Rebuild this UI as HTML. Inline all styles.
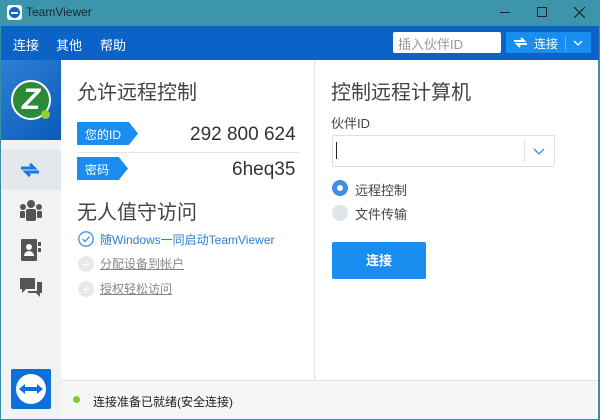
<!DOCTYPE html><html><head><meta charset="utf-8"><style>
*{margin:0;padding:0;box-sizing:border-box}
body{width:600px;height:420px;overflow:hidden;background:#3790a6;font-family:"Liberation Sans","Noto Sans CJK SC",sans-serif;position:relative}
.a{position:absolute}
.t{color:#444}
</style></head><body>
<div class="a" style="left:0;top:0;width:600px;height:26px;background:#3c95aa"></div>
<div class="a" style="left:7px;top:5px;width:15px;height:15px;background:#fff;border-radius:3px"><div class="a" style="left:2px;top:2px;width:11px;height:11px;border-radius:50%;background:#0e64c8"></div><div class="a" style="left:4px;top:7px;width:7px;height:1.5px;background:#fff"></div></div>
<div class="a" style="left:26px;top:5px;font-size:12px;color:#1a2a30">TeamViewer</div>
<div class="a" style="left:500px;top:12px;width:10px;height:1px;background:#223"></div>
<div class="a" style="left:537px;top:7px;width:10px;height:10px;border:1px solid #223"></div>
<svg class="a" style="left:574px;top:7px" width="11" height="11"><path d="M0 0L11 11M11 0L0 11" stroke="#223" stroke-width="1.2"/></svg>
<div class="a" style="left:1px;top:26px;width:598px;height:34px;background:#0b63c8"></div>
<div class="a" style="left:13px;top:35px;font-size:13px;color:#fff">连接</div>
<div class="a" style="left:56px;top:35px;font-size:13px;color:#fff">其他</div>
<div class="a" style="left:100px;top:35px;font-size:13px;color:#fff">帮助</div>
<div class="a" style="left:393px;top:32px;width:108px;height:21px;background:#fff;border-radius:2px;font-size:13px;color:#999;padding:2px 5px">插入伙伴ID</div>
<div class="a" style="left:506px;top:32px;width:85px;height:21px;background:#1a8ef0;color:#fff;font-size:12px;padding:3px 0 0 28px">连接</div>
<svg class="a" style="left:513px;top:37px" width="15" height="11"><path d="M1 4h10l-3-3M14 7H4l3 3" stroke="#fff" stroke-width="2" fill="none"/></svg>
<div class="a" style="left:565px;top:36px;width:1px;height:14px;background:#6bb6f5"></div>
<svg class="a" style="left:573px;top:40px" width="10" height="6"><path d="M1 1l4 4 4-4" stroke="#fff" stroke-width="1.3" fill="none"/></svg>
<div class="a" style="left:1px;top:60px;width:60px;height:359px;background:#f1f2f4"></div>
<div class="a" style="left:1px;top:60px;width:60px;height:80px;background:linear-gradient(135deg,#2d7fd6,#0a5bb8)"></div>
<div class="a" style="left:11px;top:80px;width:40px;height:40px;border-radius:50%;background:#2a8a3a;border:2px solid #fff"><div style="color:#fff;font-size:30px;font-weight:bold;text-align:center;line-height:36px;font-style:italic">Z</div></div>
<div class="a" style="left:41px;top:110px;width:9px;height:9px;border-radius:50%;background:#8fd02a"></div>
<div class="a" style="left:1px;top:150px;width:60px;height:40px;background:#e4e7ec"></div>
<svg class="a" style="left:20px;top:163px" width="20" height="14"><path d="M1 5h13l-4-4M19 9H6l4 4" stroke="#1678e0" stroke-width="3" fill="none"/></svg>
<svg class="a" style="left:19px;top:199px" width="24" height="22" fill="#555"><circle cx="12" cy="5" r="4"/><circle cx="4" cy="8" r="3"/><circle cx="20" cy="8" r="3"/><rect x="7" y="10" width="10" height="12" rx="2"/><rect x="1" y="12" width="5" height="7" rx="1"/><rect x="18" y="12" width="5" height="7" rx="1"/></svg>
<svg class="a" style="left:21px;top:239px" width="20" height="22"><rect x="0" y="0" width="16" height="22" rx="1" fill="#555"/><rect x="17" y="3" width="3" height="4" fill="#555"/><rect x="17" y="9" width="3" height="4" fill="#555"/><circle cx="8" cy="8" r="3" fill="#fff"/><path d="M3 17a5 5 0 0110 0z" fill="#fff"/></svg>
<svg class="a" style="left:20px;top:278px" width="22" height="20" fill="#555"><path d="M0 0h15v11H6l-4 4v-4H0z"/><path d="M17 4h5v11h-2v4l-4-4H8v-2h9z"/></svg>
<div class="a" style="left:11px;top:369px;width:40px;height:40px;background:#0e6fd8;border-radius:2px"><div class="a" style="left:5px;top:5px;width:30px;height:30px;border-radius:50%;background:#fff"></div><svg class="a" style="left:8px;top:14px" width="24" height="12"><path d="M0 6l6-5v3h12V1l6 5-6 5V8H6v3z" fill="#0e6fd8"/></svg></div>
<div class="a" style="left:61px;top:60px;width:537px;height:320px;background:#fff"></div>
<div class="a" style="left:314px;top:60px;width:1px;height:320px;background:#e2e4e8"></div>
<div class="a" style="left:61px;top:380px;width:537px;height:39px;background:#f6f6f6;border-top:1px solid #e2e2e2"></div>
<div class="a" style="left:73px;top:396px;width:7px;height:7px;border-radius:50%;background:#7fcf1f"></div>
<div class="a t" style="left:93px;top:393px;font-size:12px;color:#222">连接准备已就绪(安全连接)</div>
<div class="a t" style="left:77px;top:76px;font-size:20px">允许远程控制</div>
<div class="a" style="left:77px;top:122px;width:61px;height:23px;background:#1a8ef0;clip-path:polygon(0 0,85% 0,100% 50%,85% 100%,0 100%);color:#fff;font-size:12px;padding:4px 0 0 8px">您的ID</div>
<div class="a t" style="left:190px;top:124px;font-size:19px;color:#333">292 800 624</div>
<div class="a" style="left:77px;top:152px;width:222px;height:1px;background:#e4e4e4"></div>
<div class="a" style="left:77px;top:157px;width:51px;height:23px;background:#1a8ef0;clip-path:polygon(0 0,82% 0,100% 50%,82% 100%,0 100%);color:#fff;font-size:12px;padding:4px 0 0 8px">密码</div>
<div class="a t" style="left:232px;top:159px;font-size:19px;color:#333">6heq35</div>
<div class="a t" style="left:77px;top:196px;font-size:20px">无人值守访问</div>
<svg class="a" style="left:78px;top:231px" width="16" height="16"><circle cx="8" cy="8" r="7.2" stroke="#3d8fe0" stroke-width="1.3" fill="none"/><path d="M4.5 8l2.5 2.5 4.5-5" stroke="#3d8fe0" stroke-width="1.3" fill="none"/></svg>
<div class="a" style="left:100px;top:231px;font-size:12px;color:#2b7fd8">随Windows一同启动TeamViewer</div>
<div class="a" style="left:78px;top:256px;width:16px;height:16px;border-radius:50%;background:#e8e8e8;color:#fff;text-align:center;font-size:14px;line-height:16px">+</div>
<div class="a" style="left:100px;top:255px;font-size:12px;color:#888;text-decoration:underline">分配设备到帐户</div>
<div class="a" style="left:78px;top:281px;width:16px;height:16px;border-radius:50%;background:#e8e8e8;color:#fff;text-align:center;font-size:14px;line-height:16px">+</div>
<div class="a" style="left:100px;top:280px;font-size:12px;color:#888;text-decoration:underline">授权轻松访问</div>
<div class="a t" style="left:331px;top:76px;font-size:20px">控制远程计算机</div>
<div class="a t" style="left:331px;top:113px;font-size:13px">伙伴ID</div>
<div class="a" style="left:332px;top:135px;width:223px;height:32px;border:1px solid #dcdfe4;border-radius:2px"></div>
<div class="a" style="left:336px;top:142px;width:1px;height:17px;background:#222"></div>
<div class="a" style="left:524px;top:140px;width:1px;height:22px;background:#e0e0e0"></div>
<svg class="a" style="left:533px;top:148px" width="12" height="7"><path d="M1 1l5 5 5-5" stroke="#3d8fe0" stroke-width="1.3" fill="none"/></svg>
<div class="a" style="left:332px;top:180px;width:16px;height:16px;border-radius:50%;background:#3d8fe8"><div class="a" style="left:5px;top:5px;width:6px;height:6px;border-radius:50%;background:#fff"></div></div>
<div class="a t" style="left:355px;top:180px;font-size:13px">远程控制</div>
<div class="a" style="left:332px;top:205px;width:16px;height:16px;border-radius:50%;background:#e0e5ec"></div>
<div class="a t" style="left:355px;top:204px;font-size:13px">文件传输</div>
<div class="a" style="left:332px;top:242px;width:94px;height:37px;background:#1a8ef0;border-radius:2px;color:#fff;font-size:13px;font-weight:bold;text-align:center;line-height:37px">连接</div>
</body></html>
